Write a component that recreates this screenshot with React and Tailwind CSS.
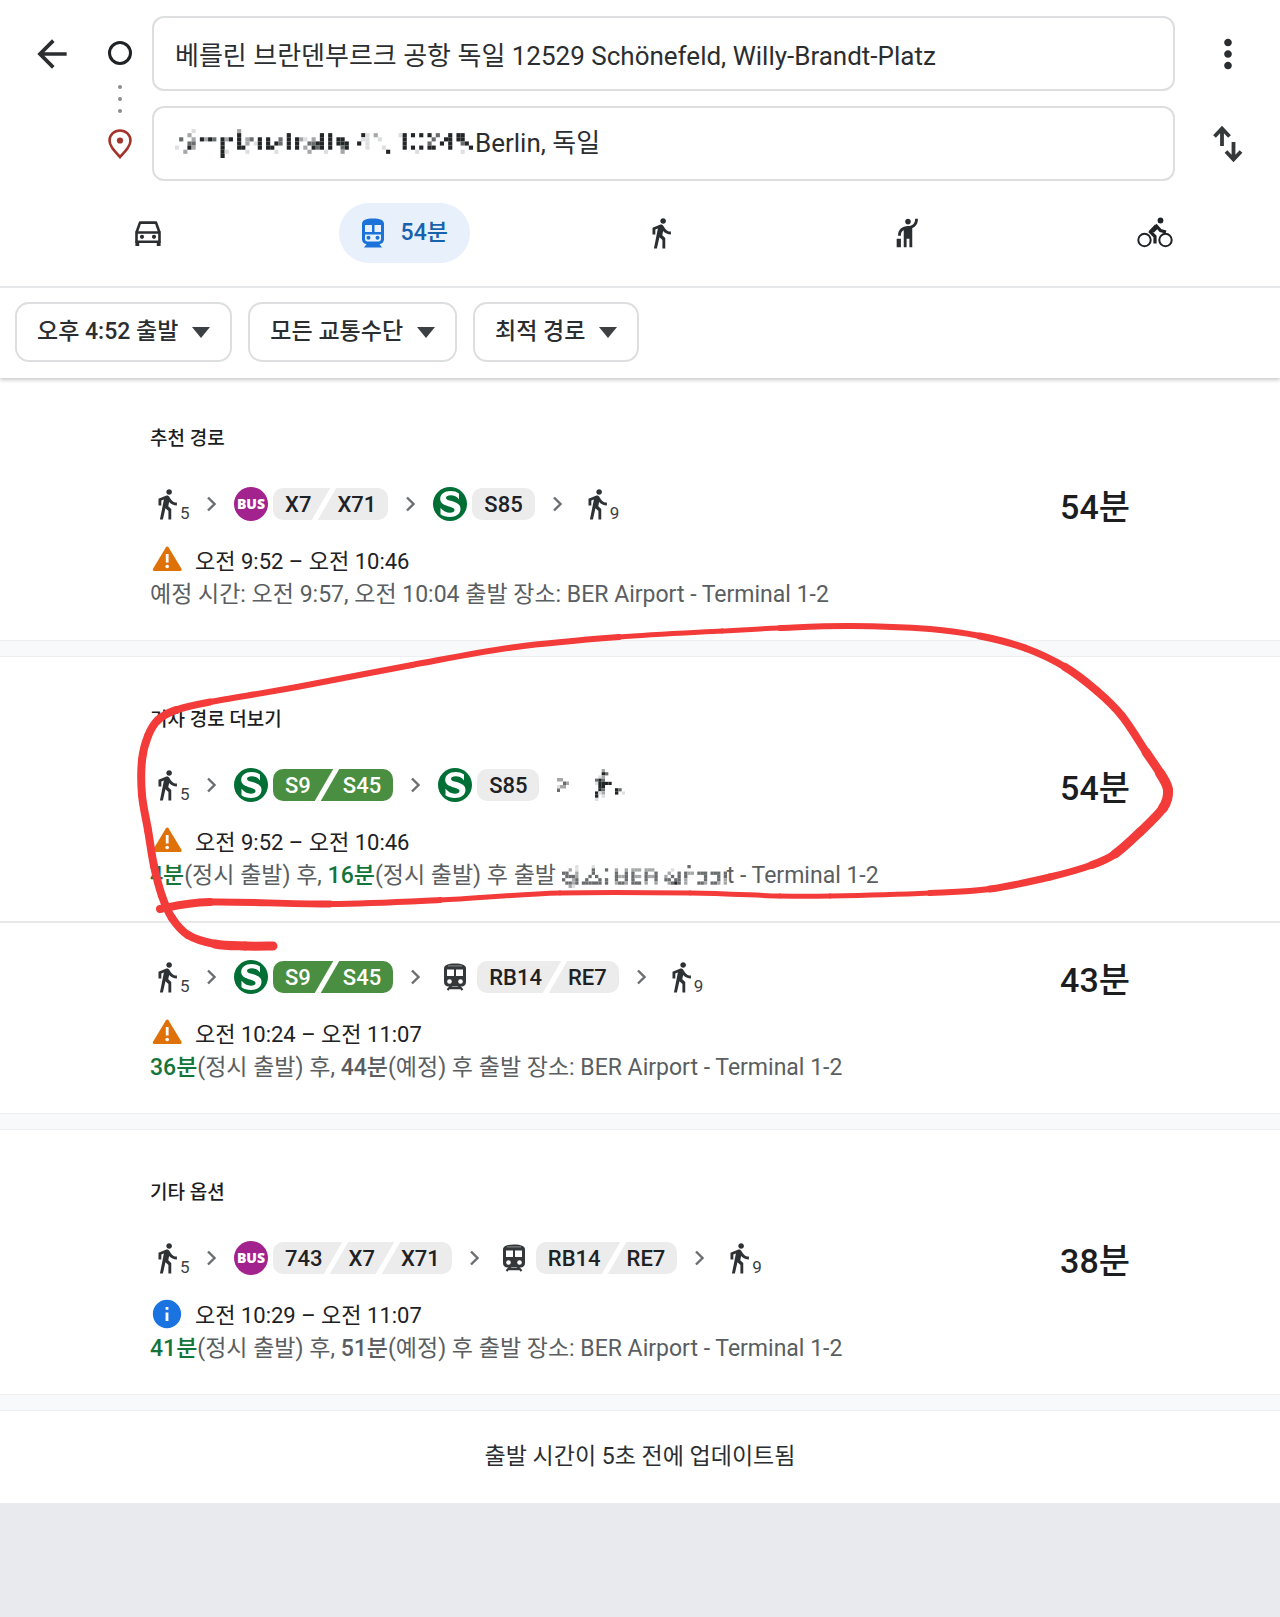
import React from "react";
import { MdArrowBack, MdDirectionsWalk, MdHail, MdInfo, MdMoreVert } from "react-icons/md";

const SHADES = { 1: "#dedfe0", 2: "#a5a7a8", 3: "#6a6d6e", 4: "#222627" };

const ADDRESS_MASK = [
  "    1          2                                                           ",
  "   2           4           4       4 4       41 2     14 4 4 4 3  4 44     ",
  " 3  2 4243 424 4 23 4 4  3 4 421 2 4 4 44    11  1     4      3  44 44     ",
  "   33      4   4 2 14 4 43 4 4  3344 4 444  4 1        4     3  4 4  34    ",
  "1  42      4   44   4 44   4 4 2 434 4  34    1   1    4 4 4 44   4    4   ",
  "  2        41    1      1       2   1   2          4      1          1     ",
  "           4                                                              ",
];

const STOP_MASK = [
  "    1    1                            3",
  "  2 1    3   3  2  2 222 222     1",
  "33  2    3      3  3 3   3  3   2  3 322 333 333 3",
  " 3332   3 3     3223 322 3223  2 3 3 3     3   3 3",
  "3  23  3   3 3  3  3 3   3  3  33 33 2     3   3 2",
  " 3323 333333 3  2332 333 2  2   2343 2   332 332 2",
  "  21",
];

const CHEVRON_MASK = ["22  ", "  32", "122 ", "3   "];
const WALK_MASK = [
  "  2      ",
  "  43     ",
  " 12      ",
  "343      ",
  "14444    ",
  " 44      ",
  " 43   43 ",
  "412   4 1",
  "4 1      ",
  "1        ",
];

function Mosaic({ rows, cell, className }) {
  const cols = Math.max(...rows.map((r) => r.trimEnd().length));
  return (
    <svg
      className={className}
      viewBox={`0 0 ${cols * cell} ${rows.length * cell}`}
      preserveAspectRatio="none"
      aria-hidden="true"
    >
      {rows.flatMap((row, y) =>
        [...row].map((c, x) =>
          c === " " ? null : (
            <rect key={`${x}-${y}`} x={x * cell} y={y * cell} width={cell} height={cell} fill={SHADES[c]} />
          )
        )
      )}
    </svg>
  );
}

function CarIcon() {
  return (
    <svg className="h-7 w-7" viewBox="0 0 28 28" fill="none" stroke="#2b2e30" strokeWidth="2.6">
      <path d="M2.5 13.5 6 3.6h16l3.500 9.900" strokeLinejoin="round" />
      <path d="M2.500 13.500h23v9.200h-23z" strokeLinejoin="round" />
      <path d="M3.300 22v5M24.700 22v5" strokeWidth="3.800" />
      <circle cx="8" cy="17.800" r="2.100" fill="#2b2e30" stroke="none" />
      <circle cx="20" cy="17.800" r="2.100" fill="#2b2e30" stroke="none" />
    </svg>
  );
}

function MetroIcon() {
  return (
    <svg className="h-[30px] w-6" viewBox="0 0 24 30">
      <path d="M1 6C1 2 5 .5 12 .5S23 2 23 6v15c0 3-2 5-5 5H6c-3 0-5-2-5-5z" fill="#1b72d8" />
      <path d="M4 7h7v7H4zM13.500 7H20v7h-6.500zM4 16.500h16V21c0 1.500-1 2.500-2.500 2.500h-11C5 23.500 4 22.500 4 21z" fill="#e8f1fd" />
      <circle cx="7.500" cy="19.800" r="2" fill="#1b72d8" />
      <circle cx="16.500" cy="19.800" r="2" fill="#1b72d8" />
      <path d="M6 25.500h12l3 4H3z" fill="#1b72d8" />
    </svg>
  );
}

function TrainIcon() {
  return (
    <svg className="h-7 w-6" viewBox="0 0 24 28">
      <path d="M1 5.500C1 2 5 .5 12 .5S23 2 23 5.500V19c0 2.800-1.800 4.500-4.500 4.500h-13C2.800 23.500 1 21.800 1 19z" fill="#35383a" />
      <path d="M5 2.900h14" stroke="#8b8e90" strokeWidth="1" />
      <path d="M4 6.500h7v6.500H4zM13 6.500h7v6.500h-7z" fill="#fff" />
      <circle cx="6.500" cy="18.500" r="2.300" fill="#fff" />
      <circle cx="17.500" cy="18.500" r="2.300" fill="#fff" />
      <path d="M8.500 22.500 4.500 27M15.500 22.500l4 4.500M7 25.200h10" stroke="#35383a" strokeWidth="2.200" />
    </svg>
  );
}

function BikeIcon() {
  return (
    <svg className="h-8 w-9" viewBox="0 0 36 32" fill="none" stroke="#202325">
      <circle cx="7.500" cy="23" r="6.200" strokeWidth="2" />
      <circle cx="28.500" cy="23" r="6.200" strokeWidth="2" />
      <circle cx="23.500" cy="3.500" r="2.900" fill="#202325" stroke="none" />
      <path d="M18 26.500v-7l-4.500-4.500 6-6 4 4.500 5.500 1.500" strokeWidth="3.200" />
      <path d="m12 14 6-6.500 4 3-5 5z" fill="#202325" stroke="none" />
    </svg>
  );
}

function SwapIcon() {
  return (
    <svg className="h-[38px] w-8" viewBox="0 0 32 38" fill="none" stroke="#35383a" strokeWidth="3.800">
      <path d="M10 21V3M2.500 11.500 10 3.500l7.500 8" />
      <path d="M21.500 17v18M14 26.500l7.500 8 7.500-8" />
    </svg>
  );
}

function PinIcon() {
  return (
    <svg className="h-[30px] w-6" viewBox="0 0 24 30" fill="none">
      <path d="M12 28C5.500 21 1.500 16.500 1.500 11.500a10.500 10 0 0 1 21 0C22.500 16.500 18.500 21 12 28z" stroke="#a4332b" strokeWidth="2.600" />
      <circle cx="12" cy="11.500" r="3.100" fill="#a4332b" />
    </svg>
  );
}

function WarningIcon() {
  return (
    <svg className="h-[34px] w-[34px]" viewBox="0 0 34 34">
      <path d="M16 4.200a1.500 1.500 0 0 1 2.500 0l13 21.500c.6 1-.1 2.300-1.300 2.300H4.300c-1.200 0-1.900-1.300-1.300-2.300z" fill="#de7208" />
      <path d="M17.200 11v8.500" stroke="#fff" strokeWidth="2.800" />
      <circle cx="17.200" cy="23.500" r="1.800" fill="#fff" />
    </svg>
  );
}

function SBahnLogo() {
  return (
    <svg className="h-[34px] w-[34px]" viewBox="0 0 34 34" role="img" aria-label="S-Bahn">
      <circle cx="17" cy="17" r="17" fill="#006f35" />
      <path
        d="M26 6.500v6c-2-2.800-5-4.200-8.200-4.200-3 0-4.800 1-4.800 2.600 0 1.700 2.500 2.300 5.500 3.200 5 1.500 9 3.200 9 7.700 0 5.200-4.500 8.200-10.500 8.200-4 0-7-1-9.500-2.700v-6.500c2.500 3.200 6 4.900 9.300 4.900 3 0 4.700-1 4.700-2.700 0-1.900-2.200-2.500-5.500-3.500-4.500-1.400-8.800-3-8.800-7.500C7.200 7.200 11.500 4 17.500 4c3.300 0 6.200.8 8.500 2.500z"
        fill="#fff"
      />
    </svg>
  );
}

function BusLogo() {
  return (
    <span className="flex h-[34px] w-[34px] items-center justify-center rounded-full bg-[#a3238e] font-['Open_Sans'] text-[14px] leading-none font-extrabold text-white">
      BUS
    </span>
  );
}

function Walk({ minutes }) {
  return (
    <span className="flex h-[34px] w-[39px] shrink-0 items-end">
      <MdDirectionsWalk className="h-[34px] w-[34px] shrink-0 text-[#2f3234]" />
      <span className="-ml-1 text-[17px] leading-4 text-[#3c4043]">{minutes}</span>
    </span>
  );
}

function Chevron() {
  return (
    <svg className="h-4 w-[9px] shrink-0" viewBox="0 0 9 16" fill="none" stroke="#6b6f72" strokeWidth="2.400">
      <path d="m1 1.500 6.500 6.500L1 14.500" />
    </svg>
  );
}

function Lines({ names, green }) {
  return (
    <span
      className={
        "flex h-8 items-center overflow-hidden rounded-[10px] px-3 text-[22px] font-medium " +
        (green ? "gap-[13px] bg-[#4a8f41] text-white" : "gap-[10px] bg-[#ececed] text-[#202124]")
      }
    >
      {names.map((name, i) => (
        <React.Fragment key={name}>
          {i > 0 && <span className="h-8 w-[6px] -skew-x-[30deg] bg-white" />}
          {name}
        </React.Fragment>
      ))}
    </span>
  );
}

function Ride({ kind, names, green }) {
  return (
    <span className="flex items-center gap-[5px]">
      {kind === "bus" && <BusLogo />}
      {kind === "sbahn" && <SBahnLogo />}
      {kind === "train" && (
        <span className="flex w-[34px] justify-center">
          <TrainIcon />
        </span>
      )}
      <Lines names={names} green={green} />
    </span>
  );
}

function Route({ steps, duration, info, time, children }) {
  return (
    <article className="px-[150px] pb-[29px]">
      <div className="flex h-[34px] items-center justify-between">
        <div className="flex items-center gap-[18px]">
          {steps.map((step, i) => (
            <React.Fragment key={i}>
              {i > 0 && !step.masked && <Chevron />}
              {step.masked && (
                <>
                  <Mosaic rows={CHEVRON_MASK} cell={3} className="h-[14px] w-3" />
                  <Mosaic rows={WALK_MASK} cell={3} className="ml-2 h-8 w-[30px]" />
                </>
              )}
              {step.walk && <Walk minutes={step.walk} />}
              {step.kind && <Ride {...step} />}
            </React.Fragment>
          ))}
        </div>
        <strong className="pt-[6px] text-[34px] leading-9 font-medium text-[#1b1d1e]">{duration}</strong>
      </div>
      <div className="mt-[22px] flex h-[34px] items-center gap-[11px] text-[22px] text-[#202124]">
        {info ? <MdInfo className="h-[34px] w-[34px] text-[#1a73e0]" /> : <WarningIcon />}
        <span className="pt-[2px]">{time}</span>
      </div>
      <p className="flex h-[34px] items-center pt-[2px] text-[23px] whitespace-pre text-[#5a5e61]">{children}</p>
    </article>
  );
}

function Heading({ children }) {
  return <h2 className="mb-[34px] px-[150px] text-[19px] leading-7 font-medium text-[#1b1d1e]">{children}</h2>;
}

function Band() {
  return <div className="h-[17px] border-y border-[#eceef0] bg-[#f8f9fa]" />;
}

function Soon({ children }) {
  return <b className="font-medium text-[#14753a]">{children}</b>;
}

function Filter({ label }) {
  return (
    <button className="flex h-[60px] items-center gap-[14px] rounded-[14px] border-2 border-[#dcdedf] px-5 text-[23px] font-medium text-[#2b2e30]">
      {label}
      <svg className="h-[11px] w-[18px]" viewBox="0 0 18 11">
        <path d="M0 0h18L9 11z" fill="#3c4043" />
      </svg>
    </button>
  );
}

function Tab({ label, children }) {
  return (
    <button aria-label={label} className="flex h-[60px] w-[111px] items-center justify-center text-[#2b2e30]">
      {children}
    </button>
  );
}

// x, y, pen width
const PEN = [
  [273, 946, 9], [245, 946, 9], [215, 944, 9], [188, 935, 8], [172, 918, 8], [162, 896, 8], [154, 866, 8],
  [148, 830, 8], [142, 795, 8], [142, 760, 8], [148, 736, 8], [158, 720, 8], [176, 710, 8], [210, 702, 7],
  [297, 687, 6], [412, 665, 6], [516, 647, 6], [619, 637, 6], [722, 631, 5], [780, 628, 5], [850, 626, 6],
  [930, 629, 6], [980, 636, 6], [1025, 648, 7], [1065, 667, 7], [1097, 691, 8], [1122, 716, 8], [1146, 752, 8],
  [1160, 773, 9], [1168, 790, 10], [1163, 808, 10], [1140, 832, 9], [1115, 854, 9], [1092, 865, 8],
  [1050, 877, 7], [990, 889, 7], [930, 893, 6], [830, 896, 5], [780, 896, 5], [690, 893, 5], [560, 893, 5],
  [440, 900, 5], [330, 904, 6], [210, 902, 7], [160, 909, 8],
];

function Scribble() {
  return (
    <svg
      className="pointer-events-none absolute top-0 left-0 h-[1000px] w-[1280px]"
      viewBox="0 0 1280 1000"
      fill="none"
      stroke="#f33b39"
      strokeLinecap="round"
      aria-hidden="true"
    >
      {PEN.slice(1).map(([x, y, w], i) => {
        const [ax, ay] = PEN[i];
        const [px, py] = PEN[i - 1] || PEN[i];
        const [nx, ny] = PEN[i + 2] || [x, y];
        return (
          <path
            key={i}
            d={`M${ax} ${ay}C${ax + (x - px) / 6} ${ay + (y - py) / 6} ${x - (nx - ax) / 6} ${y - (ny - ay) / 6} ${x} ${y}`}
            strokeWidth={w}
          />
        );
      })}
    </svg>
  );
}

const WALK_5 = { walk: 5 };
const WALK_9 = { walk: 9 };
const S_GREEN = { kind: "sbahn", names: ["S9", "S45"], green: true };
const S85 = { kind: "sbahn", names: ["S85"] };
const REGIONAL = { kind: "train", names: ["RB14", "RE7"] };

export default function App() {
  return (
    <div className="relative flex min-h-screen flex-col overflow-hidden bg-[#e8eaee] font-[Roboto,'Noto_Sans_CJK_KR',sans-serif]">
      <header className="z-10 bg-white shadow-[0_2px_4px_rgba(0,0,0,0.22)]">
        <div className="flex pt-4">
          <div className="flex w-[104px] justify-center">
            <button aria-label="뒤로" className="flex h-[75px] items-center">
              <MdArrowBack className="h-[44px] w-[44px] text-[#2b2e30]" />
            </button>
          </div>
          <div className="mr-4 flex w-8 flex-col items-center pt-[25px]">
            <span className="h-6 w-6 rounded-full border-[3px] border-[#202325]" />
            <svg className="mt-5 h-7 w-1" viewBox="0 0 4 28" fill="#8a8d8f">
              <circle cx="2" cy="2" r="2" />
              <circle cx="2" cy="14" r="2" />
              <circle cx="2" cy="26" r="2" />
            </svg>
            <span className="mt-4">
              <PinIcon />
            </span>
          </div>
          <div className="flex flex-1 flex-col gap-[15px] text-[26px] text-[#2b2e30]">
            <input
              aria-label="출발지"
              className="h-[75px] w-full rounded-[12px] border-2 border-[#dcdedf] px-[21px]"
              defaultValue="베를린 브란덴부르크 공항 독일 12529 Schönefeld, Willy-Brandt-Platz"
            />
            <div className="flex h-[75px] items-center rounded-[12px] border-2 border-[#dcdedf] px-[21px]">
              <Mosaic rows={ADDRESS_MASK} cell={4} className="h-[29px] w-[298px] shrink-0" />
              <input aria-label="도착지" className="ml-[2px] min-w-0 flex-1" defaultValue="Berlin, 독일" />
            </div>
          </div>
          <div className="flex w-[105px] flex-col items-center gap-[15px]">
            <button aria-label="더보기" className="flex h-[75px] items-center">
              <MdMoreVert className="h-[46px] w-[46px] text-[#2b2e30]" />
            </button>
            <button aria-label="출발지와 도착지 바꾸기" className="flex h-[75px] items-center">
              <SwapIcon />
            </button>
          </div>
        </div>

        <nav className="flex justify-between pt-[22px] pr-[70px] pb-[23px] pl-[92px]">
          <Tab label="자동차">
            <CarIcon />
          </Tab>
          <button className="flex h-[60px] w-[131px] items-center justify-center gap-4 rounded-full bg-[#e8f0fc] text-[23px] font-medium text-[#1761ad]">
            <MetroIcon />
            54분
          </button>
          <Tab label="도보">
            <MdDirectionsWalk className="h-[34px] w-[34px]" />
          </Tab>
          <Tab label="차량 호출">
            <MdHail className="h-[34px] w-[34px]" />
          </Tab>
          <Tab label="자전거">
            <BikeIcon />
          </Tab>
        </nav>

        <div className="flex gap-4 border-t-2 border-[#e6e7e8] px-[15px] pt-[14px] pb-4">
          <Filter label="오후 4:52 출발" />
          <Filter label="모든 교통수단" />
          <Filter label="최적 경로" />
        </div>
      </header>

      <main className="bg-white">
        <section className="pt-[47px]">
          <Heading>추천 경로</Heading>
          <Route
            steps={[WALK_5, { kind: "bus", names: ["X7", "X71"] }, S85, WALK_9]}
            duration="54분"
            time="오전 9:52 – 오전 10:46"
          >
            예정 시간: 오전 9:57, 오전 10:04 출발 장소: BER Airport - Terminal 1-2
          </Route>
        </section>
        <Band />
        <section className="pt-[49px]">
          <Heading>기차 경로 더보기</Heading>
          <Route steps={[WALK_5, S_GREEN, S85, { masked: true }]} duration="54분" time="오전 9:52 – 오전 10:46">
            <Soon>4분</Soon>(정시 출발) 후, <Soon>16분</Soon>(정시 출발) 후 출발{" "}
            <Mosaic rows={STOP_MASK} cell={3} className="h-[23px] w-[165px]" />t - Terminal 1-2
          </Route>
          <div className="border-t-2 border-[#e6e8ea] pt-[37px]">
            <Route steps={[WALK_5, S_GREEN, REGIONAL, WALK_9]} duration="43분" time="오전 10:24 – 오전 11:07">
              <Soon>36분</Soon>(정시 출발) 후, <b className="font-medium">44분</b>(예정) 후 출발 장소: BER Airport -
              {" "}Terminal 1-2
            </Route>
          </div>
        </section>
        <Band />
        <section className="pt-[49px]">
          <Heading>기타 옵션</Heading>
          <Route
            steps={[WALK_5, { kind: "bus", names: ["743", "X7", "X71"] }, REGIONAL, WALK_9]}
            duration="38분"
            info
            time="오전 10:29 – 오전 11:07"
          >
            <Soon>41분</Soon>(정시 출발) 후, <b className="font-medium">51분</b>(예정) 후 출발 장소: BER Airport -
            {" "}Terminal 1-2
          </Route>
        </section>
        <Band />
        <p className="py-[28px] text-center text-[23px] leading-9 text-[#2b2e30]">출발 시간이 5초 전에 업데이트됨</p>
      </main>
      <Scribble />
    </div>
  );
}
